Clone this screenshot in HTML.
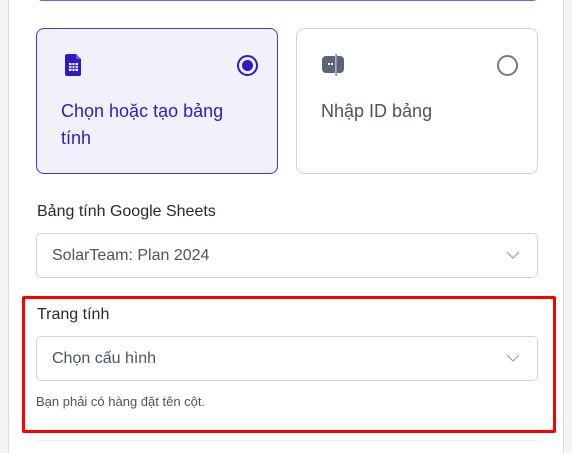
<!DOCTYPE html>
<html style="width:572px;height:453px;overflow:hidden"><head><meta charset="utf-8"><style>
*{box-sizing:border-box;margin:0;padding:0}
body{width:572px;height:453px;background:#f4f4f7;font-family:"Liberation Sans",sans-serif;position:relative;overflow:hidden}
.panel{position:absolute;left:8px;top:-10px;width:556px;height:463px;background:#fff;border-left:1px solid #d9d6f5;border-right:1px solid #d9d6f5}
.topline{position:absolute;left:37px;top:-6px;width:501px;height:7px;border:1px solid #4f6ef0;border-top:none;border-radius:0 0 5px 5px}
.card{position:absolute;top:28px;width:242px;height:146px;border-radius:8px}
.c1{left:36px;background:#f2f0fc;border:1px solid #4a36d6}
.c2{left:296px;background:#fff;border:1px solid #d4d4d8}
.ct{position:absolute;left:24px;top:69px;font-size:18px;line-height:27px}
.radio{position:absolute;top:26px;right:19px;width:21px;height:21px;border-radius:50%}
.lbl{position:absolute;left:37px;font-size:16px;color:#1f2937}
.sel{position:absolute;left:36px;width:502px;height:45px;border:1px solid #d4d4d8;border-radius:5px;font-size:16px;color:#4b5563;padding-left:15px;line-height:43px}
.chev{position:absolute;right:17px;top:16px}
.red{position:absolute;left:22px;top:296px;width:534px;height:137px;border:3px solid #ff0000;border-radius:2px}
</style></head><body>
<div class="panel"></div>
<div class="topline"></div>
<div class="card c1">
 <svg style="position:absolute;left:28px;top:25px" width="17" height="22" viewBox="0 0 17 22"><path d="M2 0h9l5 5v15a2 2 0 0 1-2 2H2a2 2 0 0 1-2-2V2a2 2 0 0 1 2-2z" fill="#2f1bc4"/><path d="M11 0v5h5" fill="#6b5ce0"/><rect x="4" y="9" width="9" height="8" fill="#fff"/><path d="M4 11.6h9M4 14.3h9M7 9v8M10 9v8" stroke="#2f1bc4" stroke-width="1"/></svg>
 <div class="radio" style="border:2px solid #2f1bc4"><div style="position:absolute;left:3px;top:3px;width:11px;height:11px;border-radius:50%;background:#2f1bc4"></div></div>
 <div class="ct" style="color:#2f1bc4">Chọn hoặc tạo bảng<br>tính</div>
</div>
<div class="card c2">
 <svg style="position:absolute;left:25px;top:24px" width="23" height="24" viewBox="0 0 23 24"><rect x="0" y="3" width="22" height="17" rx="4" fill="#5a6478"/><rect x="13" y="0" width="2" height="24" fill="#fff"/><rect x="13.5" y="1" width="1.2" height="22" fill="#5a6478"/><rect x="6" y="10" width="2" height="2" fill="#fff"/><rect x="9" y="10" width="2" height="2" fill="#fff"/></svg>
 <div class="radio" style="border:2px solid #7a7a7a"></div>
 <div class="ct" style="color:#4b5563">Nhập ID bảng</div>
</div>
<div class="lbl" style="top:203px">Bảng tính Google Sheets</div>
<div class="sel" style="top:233px">SolarTeam: Plan 2024<svg class="chev" width="14" height="10" viewBox="0 0 14 10"><path d="M1 2l6 6 6-6" stroke="#9ca3af" stroke-width="1.2" fill="none"/></svg></div>
<div class="red"></div>
<div class="lbl" style="top:306px">Trang tính</div>
<div class="sel" style="top:336px">Chọn cấu hình<svg class="chev" width="14" height="10" viewBox="0 0 14 10"><path d="M1 2l6 6 6-6" stroke="#9ca3af" stroke-width="1.2" fill="none"/></svg></div>
<div style="position:absolute;left:36px;top:394px;font-size:13px;color:#4b5563">Bạn phải có hàng đặt tên cột.</div>
<div style="position:absolute;left:36px;top:440px;width:502px;height:1px;background:#ececf0"></div>
</body></html>
